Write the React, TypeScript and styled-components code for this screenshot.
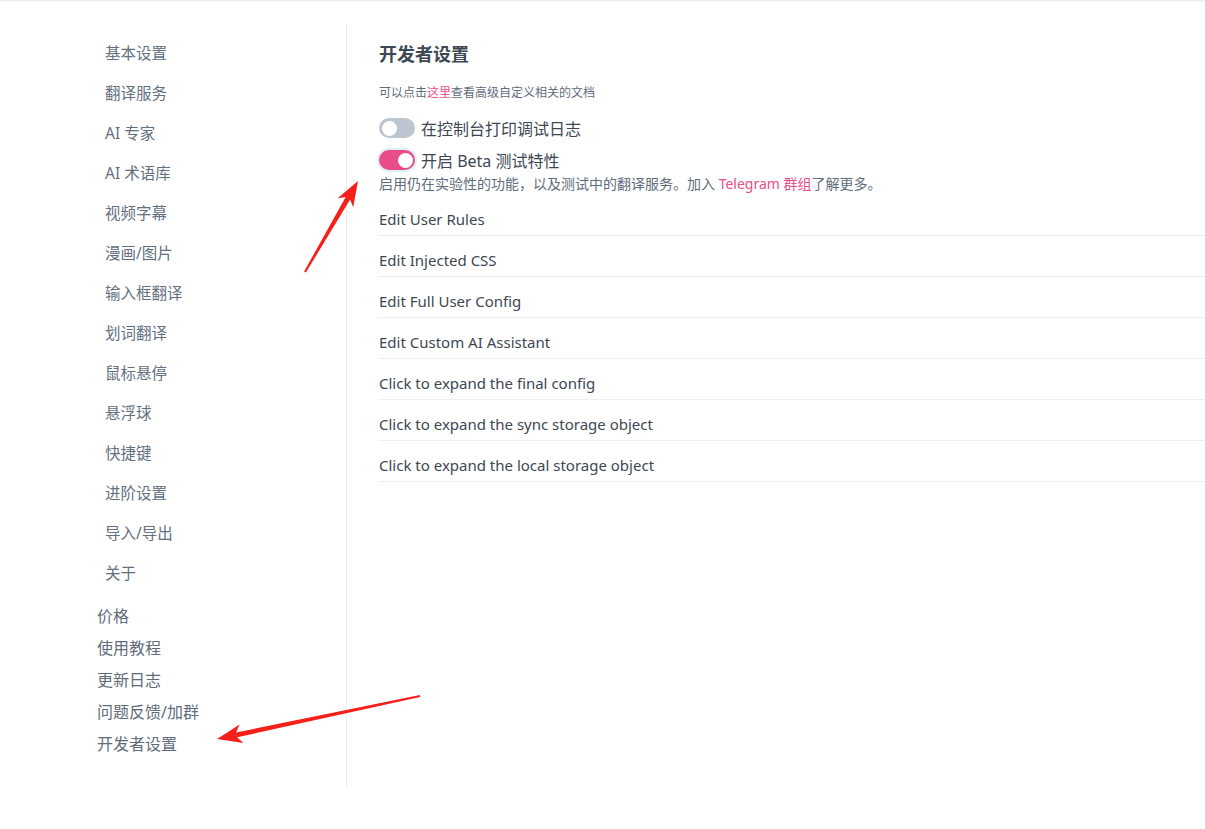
import styled, { createGlobalStyle } from "styled-components";

const GlobalStyle = createGlobalStyle`
  html, body {
    margin: 0;
    padding: 0;
    background: #ffffff;
  }
  body {
    font-family: "Noto Sans", "Noto Sans CJK SC", sans-serif;
    overflow: hidden;
  }
`;

const subMenu = [
  "基本设置",
  "翻译服务",
  "AI 专家",
  "AI 术语库",
  "视频字幕",
  "漫画/图片",
  "输入框翻译",
  "划词翻译",
  "鼠标悬停",
  "悬浮球",
  "快捷键",
  "进阶设置",
  "导入/导出",
  "关于",
];

const topMenu = ["价格", "使用教程", "更新日志", "问题反馈/加群", "开发者设置"];

const actions = [
  "Edit User Rules",
  "Edit Injected CSS",
  "Edit Full User Config",
  "Edit Custom AI Assistant",
  "Click to expand the final config",
  "Click to expand the sync storage object",
  "Click to expand the local storage object",
];

const App = () => {
  return (
    <>
      <GlobalStyle />
      <TopShadow />
      <Page>
        <Sidebar>
          <SubList>
            {subMenu.map((item) => (
              <SubItem key={item}>{item}</SubItem>
            ))}
          </SubList>
          <TopList>
            {topMenu.map((item) => (
              <TopItem key={item}>{item}</TopItem>
            ))}
          </TopList>
        </Sidebar>

        <Main>
          <Title>开发者设置</Title>
          <Hint>
            可以点击<Link>这里</Link>查看高级自定义相关的文档
          </Hint>

          <ToggleRow>
            <Switch on={false} />
            <ToggleLabel>在控制台打印调试日志</ToggleLabel>
          </ToggleRow>
          <ToggleRow>
            <Switch on={true} focused />
            <ToggleLabel>开启 Beta 测试特性</ToggleLabel>
          </ToggleRow>
          <Description>
            启用仍在实验性的功能，以及测试中的翻译服务。加入{" "}
            <Link>Telegram 群组</Link>了解更多。
          </Description>

          <ActionList>
            {actions.map((a) => (
              <ActionRow key={a}>{a}</ActionRow>
            ))}
          </ActionList>
        </Main>
      </Page>

      {/* red annotation arrows */}
      <Arrows width="1205" height="829" viewBox="0 0 1205 829">
        <polygon
          fill="#f5201a"
          points="304.1,271.5 345.7,197.0 337.6,198.2 358,181 353.2,207.2 350.1,199.6 305.9,272.5"
        />
        <polygon
          fill="#f5201a"
          points="420.2,697 237.1,737.3 243.4,743 217,739 239.6,724.4 236.1,732.5 419.8,695"
        />
      </Arrows>
    </>
  );
};

export default App;

const TopShadow = styled.div`
  height: 1px;
  background: #ececec;
  box-shadow: 0 1px 2px rgba(0, 0, 0, 0.06);
`;

const Page = styled.div`
  display: flex;
  padding-top: 23px;
`;

const Sidebar = styled.nav`
  width: 347px;
  height: 763px;
  flex-shrink: 0;
  box-sizing: border-box;
  border-right: 1px solid #e9ecef;
  padding: 9px 0 0 97px;
`;

const SubList = styled.ul`
  list-style: none;
  margin: 0;
  padding: 0 0 0 8px;
`;

const SubItem = styled.li`
  height: 40px;
  line-height: 40px;
  font-size: 15.5px;
  color: #63707f;
`;

const TopList = styled.ul`
  list-style: none;
  margin: 7px 0 0;
  padding: 0;
`;

const TopItem = styled.li`
  height: 32px;
  line-height: 32px;
  font-size: 16px;
  color: #5f6c7b;
`;

const Main = styled.main`
  flex: 1;
  padding: 18px 0 0 32px;
  color: #3d4753;
`;

const Title = styled.h1`
  margin: 0;
  font-size: 18px;
  line-height: 24px;
  font-weight: 700;
  color: #3d4852;
`;

const Hint = styled.p`
  margin: 18px 0 14px;
  font-size: 12px;
  line-height: 18px;
  color: #5f6c7b;
`;

const Link = styled.span`
  color: #ea4c89;
`;

const ToggleRow = styled.div`
  display: flex;
  align-items: center;
  gap: 6px;
  height: 24px;
  & + & {
    margin-top: 8px;
  }
`;

const Switch = styled.span<{ on: boolean; focused?: boolean }>`
  position: relative;
  width: 36px;
  height: 20px;
  border-radius: 10px;
  background: ${(p) => (p.on ? "#ea4c89" : "#bdc6cf")};
  box-shadow: ${(p) => (p.focused ? "0 0 0 2px #dcf0f7" : "none")};
  flex-shrink: 0;

  &::after {
    content: "";
    position: absolute;
    top: 2.5px;
    left: ${(p) => (p.on ? "18.5px" : "2.5px")};
    width: 15px;
    height: 15px;
    border-radius: 50%;
    background: #ffffff;
  }
`;

const ToggleLabel = styled.span`
  font-size: 16px;
  color: #3d4753;
`;

const Description = styled.p`
  margin: 3px 0 0;
  font-size: 14px;
  line-height: 18px;
  color: #5f6c7b;
`;

const ActionList = styled.div`
  margin-top: 2px;
`;

const ActionRow = styled.div`
  padding: 14px 0 6px;
  font-size: 15px;
  line-height: 20px;
  border-bottom: 1px solid #eceef0;
  color: #3d4753;
`;

const Arrows = styled.svg`
  position: absolute;
  top: 0;
  left: 0;
  pointer-events: none;
`;
